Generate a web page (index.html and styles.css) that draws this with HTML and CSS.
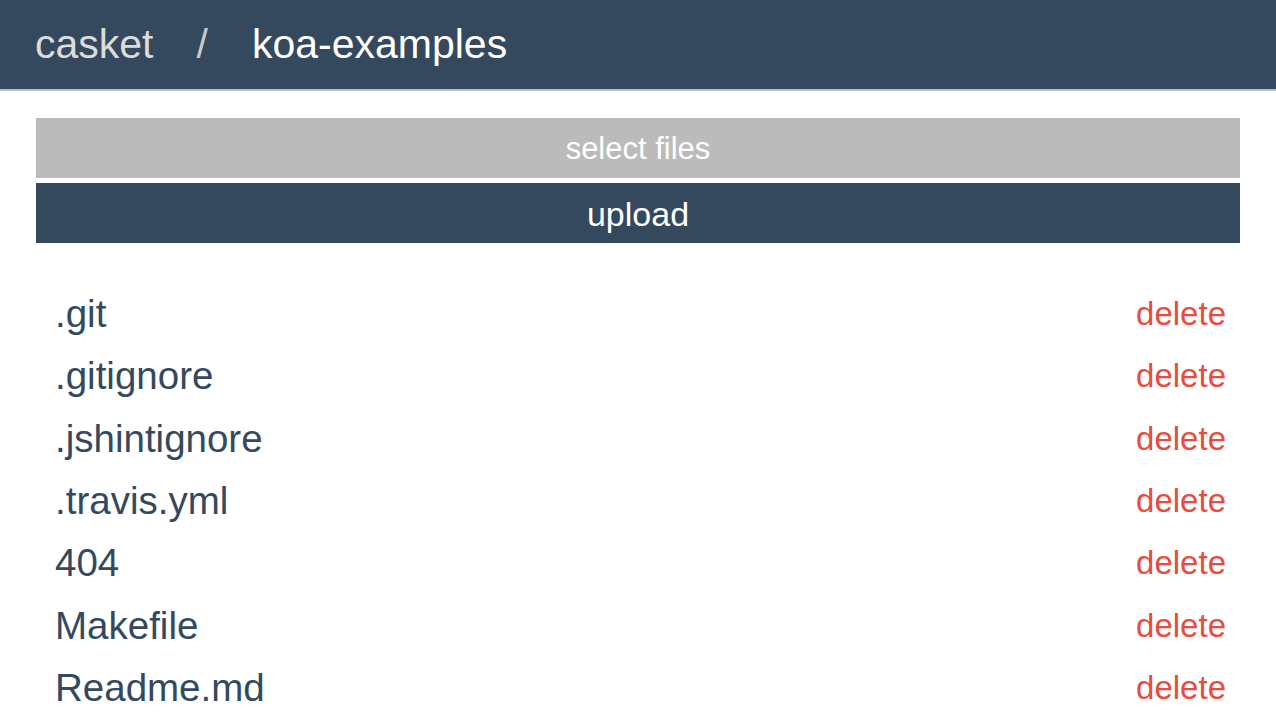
FILE: index.html
```html
<!DOCTYPE html>
<html>
<head>
<meta charset="utf-8">
<link rel="stylesheet" href="styles.css">
</head>
<body>
<header class="topbar">
  <span class="crumb crumb-root">casket</span>
  <span class="crumb-sep">/</span>
  <span class="crumb crumb-current">koa-examples</span>
</header>
<main class="content">
  <div class="actions">
    <button class="btn btn-select">select files</button>
    <button class="btn btn-upload">upload</button>
  </div>
  <ul class="files">
    <li class="file"><span class="file-name">.git</span><a class="file-delete">delete</a></li>
    <li class="file"><span class="file-name">.gitignore</span><a class="file-delete">delete</a></li>
    <li class="file"><span class="file-name">.jshintignore</span><a class="file-delete">delete</a></li>
    <li class="file"><span class="file-name">.travis.yml</span><a class="file-delete">delete</a></li>
    <li class="file"><span class="file-name">404</span><a class="file-delete">delete</a></li>
    <li class="file"><span class="file-name">Makefile</span><a class="file-delete">delete</a></li>
    <li class="file"><span class="file-name">Readme.md</span><a class="file-delete">delete</a></li>
  </ul>
</main>
</body>
</html>
```
FILE: styles.css
```css
* { box-sizing: border-box; }
html, body { margin: 0; padding: 0; background: #fff; }
body {
  font-family: "Liberation Sans", Arial, Helvetica, sans-serif;
  color: #34495e;
  overflow: hidden;
}
.topbar {
  height: 91px;
  background: #34495e;
  border-bottom: 2px solid #bdc0c2;
  display: flex;
  align-items: center;
  padding: 0 0 0 35px;
  font-size: 41px;
}
.crumb-root { color: #dcdcdc; }
.crumb-sep { color: #c8c8c8; margin: 0 44px 0 43px; }
.crumb-current { color: #ffffff; }
.content { padding: 27px 36px 0 36px; }
.actions { display: flex; flex-direction: column; gap: 5px; }
.btn {
  display: block;
  width: 100%;
  height: 60px;
  border: none;
  margin: 0;
  padding: 2px 0 0 0;
  font-family: inherit;
  color: #fff;
  cursor: pointer;
}
.btn-select { background: #bbbbbb; font-size: 31px; }
.btn-upload { background: #34495e; font-size: 34px; }
.files {
  list-style: none;
  margin: 40px 0 0 0;
  padding: 0 14px 0 19px;
}
.file {
  height: 62.33px;
  display: flex;
  align-items: center;
  justify-content: space-between;
}
.file-name { font-size: 38.5px; color: #34495e; }
.file-delete { font-size: 33px; color: #e74c3c; cursor: pointer; }
```
